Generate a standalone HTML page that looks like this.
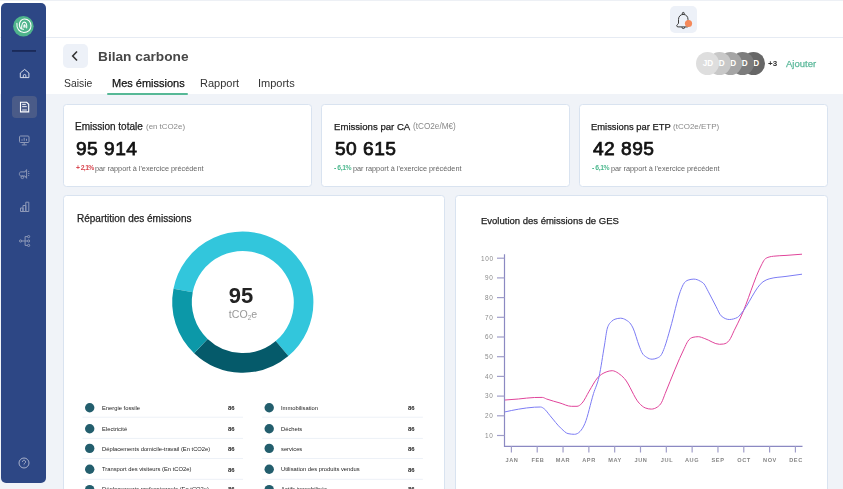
<!DOCTYPE html>
<html><head><meta charset="utf-8">
<style>
*{margin:0;padding:0;box-sizing:border-box}
html,body{width:843px;height:489px;overflow:hidden;background:#f0f3f8;font-family:"Liberation Sans",sans-serif;color:#1d1d1f}
.abs{position:absolute}
.card{position:absolute;background:#fff;border:1px solid #d9e3f0;border-radius:3.5px}
.m{-webkit-text-stroke:0.25px currentColor}
.t{position:absolute;white-space:nowrap;line-height:1;will-change:transform}
</style></head><body>
<div class="abs" style="left:0;top:0;width:843px;height:38px;background:#fff;border-bottom:1px solid #e6ebf3"></div>
<div class="abs" style="left:0;top:0;width:843px;height:1px;background:#edf0f5"></div>
<div class="abs" style="left:0;top:38px;width:843px;height:56px;background:#fff"></div>
<div class="abs" style="left:1px;top:3px;width:45px;height:480px;background:#2d4785;border-radius:5px"></div>
<svg class="abs" style="left:0;top:0" width="50" height="489" viewBox="0 0 50 489">
  <circle cx="23.4" cy="26.2" r="10.3" fill="#4fb48c"/>
  <g fill="none" stroke="#fff" stroke-width="1.05" stroke-linecap="round">
  <path d="M16.9 23.2C16.3 28.6 19.6 32.5 23.9 32.5C28.1 32.5 31 29.5 31 25.7C31 21.8 28.2 18.9 24.6 18.9C21.6 18.9 19.4 21.4 19.4 24.6C19.4 27.4 21.2 29.3 23.6 29.3"/>
  <path d="M21.7 28.3C21.4 24.8 22.6 22.1 24.3 22.1C26.1 22.1 27.1 24.6 26.7 27.9"/>
  <path d="M23.9 27.3C23.8 25.9 24.1 24.7 24.5 24.7C25 24.7 25.2 25.9 25.1 27.2"/>
  </g>
  <rect x="12" y="50.2" width="24" height="1.5" fill="#17244f"/>
  <g fill="none" stroke="#d5dbe8" stroke-width="1">
  <path d="M20.3 77.6v-4.6l4.3-3.6 4.3 3.6v4.6zM23.3 77.6v-1.8a1.3 1.3 0 0 1 2.6 0v1.8"/>
  </g>
  <rect x="12" y="96" width="25" height="22" rx="4" fill="#4a5b88"/>
  <path d="M20.5 102.3h6.2l2 2v7.6h-8.2z" fill="none" stroke="#fff" stroke-width="1.1"/>
  <path d="M22.2 104.4h3.6M22.2 106.6h4.6M22.2 110h4.6" stroke="#e8ebf3" stroke-width="1"/>
  <g fill="none" stroke="#8e99b8" stroke-width="1">
  <rect x="19.5" y="136" width="9.5" height="6.5" rx="1"/>
  <path d="M24.2 142.5v2.3M21.8 144.9h5M22 140.8v-1.5M24.2 140.8v-3M26.5 140.8v-2"/>
  <path d="M19.4 173.6c0-1 .7-1.7 1.6-1.7h4l1.6-2.3v8.7l-1.6-2.3h-4c-.9 0-1.6-.7-1.6-1.6zM28.2 171.6h1M28.2 173.5h1.2M28.2 175.4h1"/><circle cx="22.4" cy="177.3" r="1.3"/>
  <path d="M20.5 211.5v-3.5h2.5v3.5zM23 211.5v-6h2.8v6zM25.8 211.5v-9.3h3v9.3z"/>
  <circle cx="20.6" cy="241" r="1.1"/><circle cx="28.6" cy="236.6" r="1.1"/><circle cx="28.6" cy="241" r="1.1"/><circle cx="28.6" cy="245.4" r="1.1"/>
  <path d="M21.7 241h3.4M25.1 236.6v8.8M25.1 236.6h2.4M25.1 241h2.4M25.1 245.4h2.4"/>
  <circle cx="24" cy="463" r="5" stroke="#a8b1cb"/>
  <path d="M22.4 461.8a1.6 1.6 0 1 1 2.4 1.4c-.6.3-.8.7-.8 1.3M24 465.9v.3" stroke="#a8b1cb"/>
  </g>
</svg>
<div class="abs" style="left:670px;top:6px;width:27px;height:27px;background:#edf1f8;border-radius:5px"></div>
<svg class="abs" style="left:670px;top:6px" width="27" height="27" viewBox="0 0 27 27">
  <g fill="none" stroke="#3a3a3a" stroke-width="1">
  <path d="M13.3 8.4C10.5 8.4 8.5 10.6 8.5 13.4V17C8.5 18.2 6.7 18.6 6.7 19.8C6.7 20.5 7.3 20.9 8.1 20.9H17C18 20.9 18.6 20.3 18.6 19.5C18.6 18.6 18 18.2 18 17V13.4C18 10.6 16.1 8.4 13.3 8.4Z"/>
  <circle cx="13.3" cy="7.4" r="1"/>
  <path d="M11.9 21.1a1.45 1.45 0 0 0 2.9 0"/>
  </g>
  <circle cx="18.5" cy="17.5" r="3.6" fill="#f5895a"/>
</svg>
<div class="abs" style="left:63px;top:44px;width:24.5px;height:24px;background:#edf1f8;border-radius:5px"></div>
<svg class="abs" style="left:63px;top:44px" width="25" height="24"><path d="M14 7.5l-4.3 4.5 4.3 4.5" fill="none" stroke="#333" stroke-width="1.6"/></svg>
<div class="t" style="left:98.4px;top:49.50px;font-size:13.7px;font-weight:bold;color:#474747;letter-spacing:0px;">Bilan carbone</div>
<div class="t" style="left:63.8px;top:79.00px;font-size:10.4px;font-weight:normal;color:#333;letter-spacing:0px;">Saisie</div>
<div class="t" style="left:111.5px;top:77.89px;font-size:11px;font-weight:normal;color:#111;letter-spacing:0px;-webkit-text-stroke:0.25px currentColor">Mes émissions</div>
<div class="t" style="left:199.7px;top:77.89px;font-size:11px;font-weight:normal;color:#333;letter-spacing:0px;">Rapport</div>
<div class="t" style="left:258px;top:77.89px;font-size:11px;font-weight:normal;color:#333;letter-spacing:0px;">Imports</div>
<div class="abs" style="left:107px;top:93px;width:81px;height:2px;background:#56b896;border-radius:1px"></div>
<div class="abs" style="left:742.0px;top:52px;width:23px;height:23px;border-radius:50%;background:#676767;color:#fff;font-size:8.2px;font-weight:bold;text-align:center;line-height:23px;letter-spacing:0px;text-indent:1px">JD</div>
<div class="abs" style="left:730.5px;top:52px;width:23px;height:23px;border-radius:50%;background:#7c7c7c;color:#fff;font-size:8.2px;font-weight:bold;text-align:center;line-height:23px;letter-spacing:0px;text-indent:1px">JD</div>
<div class="abs" style="left:719.0px;top:52px;width:23px;height:23px;border-radius:50%;background:#a5a5a5;color:#fff;font-size:8.2px;font-weight:bold;text-align:center;line-height:23px;letter-spacing:0px;text-indent:1px">JD</div>
<div class="abs" style="left:707.5px;top:52px;width:23px;height:23px;border-radius:50%;background:#c8c8c8;color:#fff;font-size:8.2px;font-weight:bold;text-align:center;line-height:23px;letter-spacing:0px;text-indent:1px">JD</div>
<div class="abs" style="left:696.0px;top:52px;width:23px;height:23px;border-radius:50%;background:#dedede;color:#fff;font-size:8.2px;font-weight:bold;text-align:center;line-height:23px;letter-spacing:0px;text-indent:1px">JD</div>
<div class="t" style="left:768.3px;top:59.53px;font-size:8px;font-weight:bold;color:#333;letter-spacing:0px;">+3</div>
<div class="t" style="left:786.2px;top:58.96px;font-size:9.5px;font-weight:normal;color:#5bb89a;letter-spacing:0px;-webkit-text-stroke:0.25px currentColor">Ajouter</div>
<div class="card" style="left:63px;top:104px;width:249px;height:83px"></div>
<div class="card" style="left:321px;top:104px;width:249px;height:83px"></div>
<div class="card" style="left:579px;top:104px;width:249px;height:83px"></div>
<div class="card" style="left:63px;top:195px;width:382px;height:310px"></div>
<div class="card" style="left:455px;top:195px;width:373px;height:310px"></div>
<div class="t" style="left:75px;top:121.63px;font-size:10px;font-weight:normal;color:#222;letter-spacing:0px;-webkit-text-stroke:0.25px currentColor">Emission totale</div>
<div class="t" style="left:145.6px;top:123.41px;font-size:7.9px;font-weight:normal;color:#888;letter-spacing:0px;">(en tCO2e)</div>
<div class="t" style="left:76.2px;top:138.95px;font-size:19.2px;font-weight:normal;color:#111;letter-spacing:0.45px;-webkit-text-stroke:0.75px currentColor">95 914</div>
<div class="t" style="left:75.9px;top:165.04px;font-size:6.8px;font-weight:bold;color:#d9464f;letter-spacing:-0.6px;">+ 2,1%</div>
<div class="t" style="left:94.9px;top:164.62px;font-size:7.3px;font-weight:normal;color:#666;letter-spacing:0px;">par rapport à l'exercice précédent</div>
<div class="t" style="left:333.5px;top:121.97px;font-size:9.6px;font-weight:normal;color:#222;letter-spacing:0px;-webkit-text-stroke:0.25px currentColor">Emissions par CA</div>
<div class="t" style="left:413px;top:123.16px;font-size:8.2px;font-weight:normal;color:#888;letter-spacing:0px;">(tCO2e/M€)</div>
<div class="t" style="left:334.8px;top:138.95px;font-size:19.2px;font-weight:normal;color:#111;letter-spacing:0.45px;-webkit-text-stroke:0.75px currentColor">50 615</div>
<div class="t" style="left:333.9px;top:165.04px;font-size:6.8px;font-weight:bold;color:#4cb88e;letter-spacing:-0.4px;">- 6,1%</div>
<div class="t" style="left:352.9px;top:164.62px;font-size:7.3px;font-weight:normal;color:#666;letter-spacing:0px;">par rapport à l'exercice précédent</div>
<div class="t" style="left:591.3px;top:122.44px;font-size:9.4px;font-weight:normal;color:#222;letter-spacing:0px;-webkit-text-stroke:0.25px currentColor">Emissions par ETP</div>
<div class="t" style="left:672.5px;top:123.43px;font-size:8px;font-weight:normal;color:#888;letter-spacing:0px;">(tCO2e/ETP)</div>
<div class="t" style="left:592.8px;top:138.95px;font-size:19.2px;font-weight:normal;color:#111;letter-spacing:0.45px;-webkit-text-stroke:0.75px currentColor">42 895</div>
<div class="t" style="left:591.9px;top:165.04px;font-size:6.8px;font-weight:bold;color:#4cb88e;letter-spacing:-0.4px;">- 6,1%</div>
<div class="t" style="left:611px;top:164.62px;font-size:7.3px;font-weight:normal;color:#666;letter-spacing:0px;">par rapport à l'exercice précédent</div>
<div class="t" style="left:76.6px;top:213.63px;font-size:10px;font-weight:normal;color:#222;letter-spacing:0px;-webkit-text-stroke:0.25px currentColor">Répartition des émissions</div>
<div class="t" style="left:480.7px;top:216.46px;font-size:9.5px;font-weight:normal;color:#222;letter-spacing:0px;-webkit-text-stroke:0.25px currentColor">Evolution des émissions de GES</div>
<svg class="abs" style="left:0;top:0" width="843" height="489"><g fill="none" stroke-width="19.6"><path d="M183.12 290.50A60.8 60.8 0 1 1 282.04 348.54" stroke="#32c6dc"/><path d="M282.04 348.54A60.8 60.8 0 0 1 200.87 346.13" stroke="#055a6a"/><path d="M200.87 346.13A60.8 60.8 0 0 1 183.12 290.50" stroke="#0c98a8"/></g><rect x="82.5" y="416.7" width="160.5" height="1" fill="#edf1f7"/><rect x="262.2" y="416.7" width="160.7" height="1" fill="#edf1f7"/><rect x="82.5" y="437.9" width="160.5" height="1" fill="#edf1f7"/><rect x="262.2" y="437.9" width="160.7" height="1" fill="#edf1f7"/><rect x="82.5" y="458.0" width="160.5" height="1" fill="#edf1f7"/><rect x="262.2" y="458.0" width="160.7" height="1" fill="#edf1f7"/><rect x="82.5" y="478.8" width="160.5" height="1" fill="#edf1f7"/><rect x="262.2" y="478.8" width="160.7" height="1" fill="#edf1f7"/><circle cx="89.7" cy="407.7" r="4.7" fill="#235e6d"/><circle cx="269.2" cy="407.7" r="4.7" fill="#235e6d"/><circle cx="89.7" cy="428.7" r="4.7" fill="#235e6d"/><circle cx="269.2" cy="428.7" r="4.7" fill="#235e6d"/><circle cx="89.7" cy="448.4" r="4.7" fill="#235e6d"/><circle cx="269.2" cy="448.4" r="4.7" fill="#235e6d"/><circle cx="89.7" cy="469.2" r="4.7" fill="#235e6d"/><circle cx="269.2" cy="469.2" r="4.7" fill="#235e6d"/><circle cx="89.7" cy="489.6" r="4.7" fill="#235e6d"/><circle cx="269.2" cy="489.6" r="4.7" fill="#235e6d"/><path d="M504.5 254.3V446.3H802.5" fill="none" stroke="#8b89c2" stroke-width="1.2"/><path d="M497 258.20H504.5" stroke="#a09ec9" stroke-width="1.2"/><path d="M497 277.90H504.5" stroke="#a09ec9" stroke-width="1.2"/><path d="M497 297.60H504.5" stroke="#a09ec9" stroke-width="1.2"/><path d="M497 317.30H504.5" stroke="#a09ec9" stroke-width="1.2"/><path d="M497 337.00H504.5" stroke="#a09ec9" stroke-width="1.2"/><path d="M497 356.70H504.5" stroke="#a09ec9" stroke-width="1.2"/><path d="M497 376.40H504.5" stroke="#a09ec9" stroke-width="1.2"/><path d="M497 396.10H504.5" stroke="#a09ec9" stroke-width="1.2"/><path d="M497 415.80H504.5" stroke="#a09ec9" stroke-width="1.2"/><path d="M497 435.50H504.5" stroke="#a09ec9" stroke-width="1.2"/><path d="M511.40 446.3V452.5" stroke="#a09ec9" stroke-width="1.2"/><path d="M537.22 446.3V452.5" stroke="#a09ec9" stroke-width="1.2"/><path d="M563.04 446.3V452.5" stroke="#a09ec9" stroke-width="1.2"/><path d="M588.86 446.3V452.5" stroke="#a09ec9" stroke-width="1.2"/><path d="M614.68 446.3V452.5" stroke="#a09ec9" stroke-width="1.2"/><path d="M640.50 446.3V452.5" stroke="#a09ec9" stroke-width="1.2"/><path d="M666.32 446.3V452.5" stroke="#a09ec9" stroke-width="1.2"/><path d="M692.14 446.3V452.5" stroke="#a09ec9" stroke-width="1.2"/><path d="M717.96 446.3V452.5" stroke="#a09ec9" stroke-width="1.2"/><path d="M743.78 446.3V452.5" stroke="#a09ec9" stroke-width="1.2"/><path d="M769.60 446.3V452.5" stroke="#a09ec9" stroke-width="1.2"/><path d="M795.42 446.3V452.5" stroke="#a09ec9" stroke-width="1.2"/><path d="M505.00 400.00C509.47 399.69 513.93 399.37 518.40 399.00C523.73 398.56 529.07 397.64 534.40 397.50C537.03 397.43 539.67 397.40 542.30 397.40C543.73 397.40 545.17 398.49 546.60 399.00C551.07 400.58 555.53 401.68 560.00 403.00C563.77 404.11 567.53 406.30 571.30 406.30C573.20 406.30 575.10 406.30 577.00 406.30C578.63 406.30 580.27 404.99 581.90 403.30C584.33 400.78 586.77 395.08 589.20 391.10C591.93 386.63 594.67 381.16 597.40 378.00C600.30 374.64 603.20 373.19 606.10 372.00C608.13 371.17 610.17 370.70 612.20 370.70C614.23 370.70 616.27 371.90 618.30 373.20C620.37 374.52 622.43 376.31 624.50 378.60C629.40 384.03 634.30 398.10 639.20 403.20C641.20 405.28 643.20 407.11 645.20 407.90C647.23 408.70 649.27 409.10 651.30 409.10C653.33 409.10 655.37 408.40 657.40 407.00C658.83 406.01 660.27 404.88 661.70 402.20C662.87 400.02 664.03 396.38 665.20 393.50C671.57 377.79 677.93 361.39 684.30 348.30C685.47 345.90 686.63 343.06 687.80 341.30C689.53 338.69 691.27 337.69 693.00 337.30C694.77 336.90 696.53 336.70 698.30 336.70C700.47 336.70 702.63 337.90 704.80 338.60C709.70 340.18 714.60 344.30 719.50 344.30C720.87 344.30 722.23 344.20 723.60 344.00C725.50 343.72 727.40 342.77 729.30 340.30C730.93 338.18 732.57 333.80 734.20 330.50C736.40 326.06 738.60 321.75 740.80 317.00C747.70 302.10 754.60 277.75 761.50 264.90C762.50 263.04 763.50 260.73 764.50 259.60C766.03 257.87 767.57 257.53 769.10 257.00C770.63 256.47 772.17 256.40 773.70 256.20C777.80 255.67 781.90 255.68 786.00 255.40C791.33 255.03 796.67 254.62 802.00 254.20" fill="none" stroke="#e0449a" stroke-width="1"/><path d="M505.00 411.90C509.47 410.92 513.93 409.94 518.40 409.20C523.73 408.31 529.07 407.51 534.40 407.20C536.43 407.08 538.47 407.00 540.50 407.00C541.73 407.00 542.97 407.87 544.20 408.80C546.13 410.26 548.07 413.35 550.00 415.60C553.80 420.03 557.60 425.31 561.40 428.70C563.60 430.66 565.80 433.13 568.00 433.60C570.17 434.07 572.33 434.30 574.50 434.30C576.33 434.30 578.17 433.37 580.00 431.50C581.63 429.84 583.27 427.26 584.90 423.50C587.77 416.90 590.63 402.83 593.50 393.60C595.37 387.59 597.23 384.84 599.10 376.50C600.90 368.46 602.70 355.53 604.50 345.00C605.47 339.34 606.43 330.99 607.40 328.00C608.87 323.47 610.33 322.69 611.80 321.20C612.87 320.12 613.93 319.58 615.00 319.20C616.87 318.53 618.73 318.20 620.60 318.20C622.47 318.20 624.33 318.92 626.20 320.10C627.70 321.05 629.20 321.83 630.70 324.00C631.47 325.11 632.23 326.43 633.00 328.00C635.07 332.25 637.13 340.73 639.20 346.00C640.13 348.38 641.07 350.97 642.00 352.70C643.50 355.49 645.00 356.13 646.50 357.20C648.37 358.53 650.23 359.20 652.10 359.20C653.97 359.20 655.83 358.73 657.70 357.80C658.97 357.17 660.23 356.64 661.50 354.50C662.50 352.81 663.50 350.16 664.50 347.50C666.47 342.27 668.43 334.79 670.40 328.00C673.70 316.61 677.00 300.15 680.30 291.40C681.27 288.84 682.23 286.35 683.20 284.60C684.83 281.64 686.47 280.66 688.10 280.10C690.03 279.43 691.97 279.10 693.90 279.10C696.03 279.10 698.17 279.96 700.30 281.20C701.53 281.92 702.77 282.39 704.00 283.90C705.37 285.58 706.73 288.70 708.10 291.20C710.80 296.14 713.50 301.75 716.20 306.80C717.83 309.85 719.47 314.33 721.10 315.80C723.83 318.27 726.57 319.50 729.30 319.50C732.03 319.50 734.77 318.80 737.50 317.40C738.60 316.84 739.70 315.19 740.80 314.00C748.20 305.97 755.60 286.89 763.00 281.80C764.03 281.09 765.07 280.49 766.10 280.00C767.37 279.40 768.63 279.06 769.90 278.70C775.27 277.17 780.63 277.15 786.00 276.40C791.33 275.65 796.67 274.93 802.00 274.20" fill="none" stroke="#7c7cf4" stroke-width="1"/></svg>
<div class="t" style="left:192px;top:285.28px;font-size:22px;font-weight:bold;color:#222;letter-spacing:0px;width:102px;text-align:center;left:190.2px">95</div>
<div class="t" style="left:192px;top:308.63px;font-size:10.6px;font-weight:normal;color:#999;letter-spacing:0px;width:102px;text-align:center;left:191.5px">tCO<span style="font-size:6.5px;position:relative;top:1.5px">2</span>e</div>
<div class="t" style="left:101.8px;top:405.89px;font-size:5.8px;font-weight:normal;color:#222;letter-spacing:0px;">Energie fossile</div>
<div class="t" style="left:227.7px;top:405.22px;font-size:6px;font-weight:bold;color:#222;letter-spacing:0px;">86</div>
<div class="t" style="left:280.9px;top:405.89px;font-size:5.8px;font-weight:normal;color:#222;letter-spacing:0px;">Immobilisation</div>
<div class="t" style="left:407.6px;top:405.22px;font-size:6px;font-weight:bold;color:#222;letter-spacing:0px;">86</div>
<div class="t" style="left:101.8px;top:426.89px;font-size:5.8px;font-weight:normal;color:#222;letter-spacing:0px;">Electricité</div>
<div class="t" style="left:227.7px;top:426.22px;font-size:6px;font-weight:bold;color:#222;letter-spacing:0px;">86</div>
<div class="t" style="left:280.9px;top:426.89px;font-size:5.8px;font-weight:normal;color:#222;letter-spacing:0px;">Déchets</div>
<div class="t" style="left:407.6px;top:426.22px;font-size:6px;font-weight:bold;color:#222;letter-spacing:0px;">86</div>
<div class="t" style="left:101.8px;top:446.59px;font-size:5.8px;font-weight:normal;color:#222;letter-spacing:0px;">Déplacements domicile-travail (En tCO2e)</div>
<div class="t" style="left:227.7px;top:445.92px;font-size:6px;font-weight:bold;color:#222;letter-spacing:0px;">86</div>
<div class="t" style="left:280.9px;top:446.59px;font-size:5.8px;font-weight:normal;color:#222;letter-spacing:0px;">services</div>
<div class="t" style="left:407.6px;top:445.92px;font-size:6px;font-weight:bold;color:#222;letter-spacing:0px;">86</div>
<div class="t" style="left:101.8px;top:467.39px;font-size:5.8px;font-weight:normal;color:#222;letter-spacing:0px;">Transport des visiteurs (En tCO2e)</div>
<div class="t" style="left:227.7px;top:466.72px;font-size:6px;font-weight:bold;color:#222;letter-spacing:0px;">86</div>
<div class="t" style="left:280.9px;top:467.39px;font-size:5.8px;font-weight:normal;color:#222;letter-spacing:0px;">Utilisation des produits vendus</div>
<div class="t" style="left:407.6px;top:466.72px;font-size:6px;font-weight:bold;color:#222;letter-spacing:0px;">86</div>
<div class="t" style="left:101.8px;top:486.69px;font-size:5.8px;font-weight:normal;color:#222;letter-spacing:0px;">Déplacements professionnels (En tCO2e)</div>
<div class="t" style="left:227.7px;top:486.02px;font-size:6px;font-weight:bold;color:#222;letter-spacing:0px;">86</div>
<div class="t" style="left:280.9px;top:486.69px;font-size:5.8px;font-weight:normal;color:#222;letter-spacing:0px;">Actifs immobilisés</div>
<div class="t" style="left:407.6px;top:486.02px;font-size:6px;font-weight:bold;color:#222;letter-spacing:0px;">86</div>
<div class="t" style="left:0px;top:255.58px;font-size:6.4px;font-weight:normal;color:#8a8a8a;letter-spacing:0.7px;left:auto;right:349.4px">100</div>
<div class="t" style="left:0px;top:275.28px;font-size:6.4px;font-weight:normal;color:#8a8a8a;letter-spacing:0.7px;left:auto;right:349.4px">90</div>
<div class="t" style="left:0px;top:294.98px;font-size:6.4px;font-weight:normal;color:#8a8a8a;letter-spacing:0.7px;left:auto;right:349.4px">80</div>
<div class="t" style="left:0px;top:314.68px;font-size:6.4px;font-weight:normal;color:#8a8a8a;letter-spacing:0.7px;left:auto;right:349.4px">70</div>
<div class="t" style="left:0px;top:334.38px;font-size:6.4px;font-weight:normal;color:#8a8a8a;letter-spacing:0.7px;left:auto;right:349.4px">60</div>
<div class="t" style="left:0px;top:354.08px;font-size:6.4px;font-weight:normal;color:#8a8a8a;letter-spacing:0.7px;left:auto;right:349.4px">50</div>
<div class="t" style="left:0px;top:373.78px;font-size:6.4px;font-weight:normal;color:#8a8a8a;letter-spacing:0.7px;left:auto;right:349.4px">40</div>
<div class="t" style="left:0px;top:393.48px;font-size:6.4px;font-weight:normal;color:#8a8a8a;letter-spacing:0.7px;left:auto;right:349.4px">30</div>
<div class="t" style="left:0px;top:413.18px;font-size:6.4px;font-weight:normal;color:#8a8a8a;letter-spacing:0.7px;left:auto;right:349.4px">20</div>
<div class="t" style="left:0px;top:432.88px;font-size:6.4px;font-weight:normal;color:#8a8a8a;letter-spacing:0.7px;left:auto;right:349.4px">10</div>
<div class="t" style="left:496.7px;top:457.66px;font-size:5.6px;font-weight:bold;color:#868686;letter-spacing:0.6px;width:30px;text-align:center">JAN</div>
<div class="t" style="left:522.52px;top:457.66px;font-size:5.6px;font-weight:bold;color:#868686;letter-spacing:0.6px;width:30px;text-align:center">FEB</div>
<div class="t" style="left:548.3399999999999px;top:457.66px;font-size:5.6px;font-weight:bold;color:#868686;letter-spacing:0.6px;width:30px;text-align:center">MAR</div>
<div class="t" style="left:574.16px;top:457.66px;font-size:5.6px;font-weight:bold;color:#868686;letter-spacing:0.6px;width:30px;text-align:center">APR</div>
<div class="t" style="left:599.9799999999999px;top:457.66px;font-size:5.6px;font-weight:bold;color:#868686;letter-spacing:0.6px;width:30px;text-align:center">MAY</div>
<div class="t" style="left:625.8px;top:457.66px;font-size:5.6px;font-weight:bold;color:#868686;letter-spacing:0.6px;width:30px;text-align:center">JUN</div>
<div class="t" style="left:651.6199999999999px;top:457.66px;font-size:5.6px;font-weight:bold;color:#868686;letter-spacing:0.6px;width:30px;text-align:center">JUL</div>
<div class="t" style="left:677.4399999999999px;top:457.66px;font-size:5.6px;font-weight:bold;color:#868686;letter-spacing:0.6px;width:30px;text-align:center">AUG</div>
<div class="t" style="left:703.26px;top:457.66px;font-size:5.6px;font-weight:bold;color:#868686;letter-spacing:0.6px;width:30px;text-align:center">SEP</div>
<div class="t" style="left:729.0799999999999px;top:457.66px;font-size:5.6px;font-weight:bold;color:#868686;letter-spacing:0.6px;width:30px;text-align:center">OCT</div>
<div class="t" style="left:754.8999999999999px;top:457.66px;font-size:5.6px;font-weight:bold;color:#868686;letter-spacing:0.6px;width:30px;text-align:center">NOV</div>
<div class="t" style="left:780.7199999999999px;top:457.66px;font-size:5.6px;font-weight:bold;color:#868686;letter-spacing:0.6px;width:30px;text-align:center">DEC</div>
</body></html>
